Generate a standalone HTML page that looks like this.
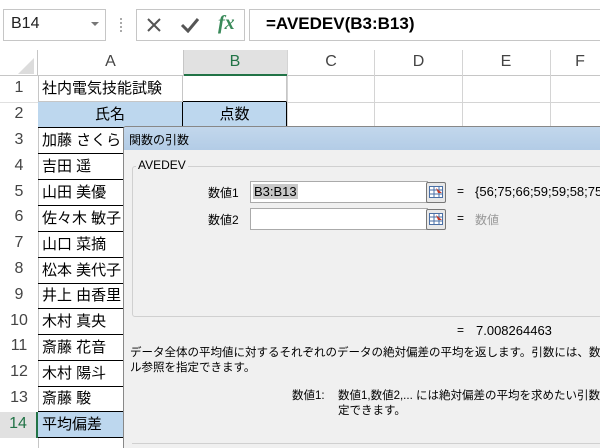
<!DOCTYPE html>
<html><head><meta charset="utf-8"><style>
*{margin:0;padding:0;box-sizing:border-box}
html,body{width:600px;height:448px;overflow:hidden;background:#fff}
body{font-family:"Liberation Sans","Noto Sans CJK JP",sans-serif}
#w{position:relative;width:600px;height:448px;overflow:hidden}
.a{position:absolute}
.t{font-size:15px;color:#000;white-space:nowrap}
.rn{position:absolute;left:0;width:38px;text-align:center;font-size:16px;color:#444}
.ca{position:absolute;left:38px;width:145px;height:26px;border-bottom:1px solid #000;border-right:1px solid #000;font-size:15px;padding-left:4px;line-height:25px;white-space:nowrap;overflow:hidden}
.d{font-size:11.5px;color:#000;white-space:nowrap}
</style></head><body><div id="w">
<div class="a" style="left:3px;top:9px;width:103px;height:32px;border:1px solid #c6c6c6"></div>
<div class="a t" style="left:11px;top:15px;font-size:16px;color:#222">B14</div>
<div class="a" style="left:91px;top:22px;border-left:4px solid transparent;border-right:4px solid transparent;border-top:4px solid #777"></div>
<div class="a" style="left:120px;top:18px;width:2px;height:14px;border-left:2px dotted #aaa"></div>
<div class="a" style="left:136px;top:9px;width:109px;height:32px;border:1px solid #c6c6c6"></div>
<svg class="a" style="left:146px;top:17px" width="16" height="16"><path d="M2 2L14 14M14 2L2 14" stroke="#555" stroke-width="2"/></svg>
<svg class="a" style="left:180px;top:17px" width="20" height="16"><path d="M2 8L8 14L18 2" stroke="#555" stroke-width="3" fill="none"/></svg>
<div class="a" style="left:218px;top:12px;font-family:'Liberation Serif',serif;font-style:italic;font-weight:bold;font-size:20px;color:#3a8a5a">fx</div>
<div class="a" style="left:249px;top:9px;width:351px;height:32px;border:1px solid #c6c6c6;border-right:none"></div>
<div class="a t" style="left:266px;top:14px;font-size:17px;font-weight:bold">=AVEDEV(B3:B13)</div>
<div class="a" style="left:0;top:50px;width:600px;height:26px;background:#fff;border-bottom:1px solid #c6c6c6"></div>
<div class="a" style="left:0;top:50px;width:38px;height:26px;border-right:1px solid #c6c6c6"></div>
<div class="a" style="left:18px;top:58px;border-left:16px solid transparent;border-bottom:16px solid #dcdcdc"></div>
<div class="a" style="left:183px;top:50px;width:104px;height:26px;background:#e1e1e1;border-bottom:2px solid #217346"></div>
<div class="a t" style="left:38px;top:53px;width:145px;text-align:center;font-size:16px;color:#444">A</div>
<div class="a t" style="left:183px;top:53px;width:104px;text-align:center;font-size:16px;color:#217346">B</div>
<div class="a t" style="left:287px;top:53px;width:88px;text-align:center;font-size:16px;color:#444">C</div>
<div class="a t" style="left:375px;top:53px;width:87px;text-align:center;font-size:16px;color:#444">D</div>
<div class="a t" style="left:462px;top:53px;width:88px;text-align:center;font-size:16px;color:#444">E</div>
<div class="a t" style="left:560px;top:53px;width:40px;text-align:center;font-size:16px;color:#444">F</div>
<div class="a" style="left:183px;top:50px;width:1px;height:26px;background:#c6c6c6"></div>
<div class="a" style="left:287px;top:50px;width:1px;height:78px;background:#d4d4d4"></div>
<div class="a" style="left:374px;top:50px;width:1px;height:78px;background:#d4d4d4"></div>
<div class="a" style="left:462px;top:50px;width:1px;height:78px;background:#d4d4d4"></div>
<div class="a" style="left:550px;top:50px;width:1px;height:78px;background:#d4d4d4"></div>
<div class="a" style="left:38px;top:76px;width:1px;height:372px;background:#c6c6c6"></div>
<div class="a" style="left:287px;top:102px;width:313px;height:1px;background:#d4d4d4"></div>
<div class="rn" style="top:79px">1</div><div class="rn" style="top:105px">2</div><div class="rn" style="top:131px">3</div><div class="rn" style="top:157px">4</div><div class="rn" style="top:183px">5</div><div class="rn" style="top:208px">6</div><div class="rn" style="top:234px">7</div><div class="rn" style="top:260px">8</div><div class="rn" style="top:286px">9</div><div class="rn" style="top:312px">10</div><div class="rn" style="top:337px">11</div><div class="rn" style="top:363px">12</div><div class="rn" style="top:389px">13</div>
<div class="rn" style="top:412px;height:26px;background:#e1e1e1;border-right:2px solid #217346;padding-top:3px;color:#217346">14</div>
<div class="a" style="left:0;top:102px;width:38px;height:1px;background:#e0e0e0"></div>
<div class="ca" style="top:76px;border-bottom-color:#c6c6c6;border-right-color:#c6c6c6">社内電気技能試験</div>
<div class="a" style="left:183px;top:76px;width:104px;height:26px;border-bottom:1px solid #000;border-right:1px solid #c6c6c6"></div>
<div class="ca" style="top:102px;background:#bdd7ee;text-align:center;padding:0">氏名</div>
<div class="a" style="left:183px;top:102px;width:104px;height:26px;background:#bdd7ee;border-bottom:1px solid #000;border-right:1px solid #000;text-align:center;line-height:25px;font-size:15px">点数</div>
<div class="ca" style="top:128px">加藤 さくら</div>
<div class="ca" style="top:154px">吉田 遥</div>
<div class="ca" style="top:180px">山田 美優</div>
<div class="ca" style="top:206px">佐々木 敏子</div>
<div class="ca" style="top:232px">山口 菜摘</div>
<div class="ca" style="top:258px">松本 美代子</div>
<div class="ca" style="top:283px">井上 由香里</div>
<div class="ca" style="top:309px">木村 真央</div>
<div class="ca" style="top:335px">斎藤 花音</div>
<div class="ca" style="top:361px">木村 陽斗</div>
<div class="ca" style="top:386px">斎藤 駿</div>
<div class="ca" style="top:412px;background:#bdd7ee">平均偏差</div>
<div class="a" style="left:123px;top:126px;width:477px;height:322px;background:#f0f0f0;border:1px solid #888;border-right:none;border-bottom:none;border-radius:3px 0 0 0;overflow:hidden">
<div class="a" style="left:0;top:0;width:477px;height:23px;background:linear-gradient(#c2d7ec,#b3cce6)"></div>
<div class="a d" style="left:5px;top:4px;font-size:12px">関数の引数</div>
<div class="a" style="left:8px;top:39px;width:470px;height:151px;border:1px solid #d0d0d0;border-radius:3px"></div>
<div class="a d" style="left:12px;top:31px;background:#f0f0f0;padding:0 2px;font-size:12px">AVEDEV</div>
<div class="a d" style="left:84px;top:57px;font-size:12px">数値1</div>
<div class="a d" style="left:84px;top:84px;font-size:12px">数値2</div>
<div class="a" style="left:126px;top:54px;width:178px;height:22px;background:#fff;border:1px solid #aaa"></div>
<div class="a" style="left:129px;top:57px;height:15px;background:#c8c8c8;font-size:13px;line-height:15px;padding:0 1px">B3:B13</div>
<div class="a" style="left:126px;top:81px;width:178px;height:22px;background:#fff;border:1px solid #aaa"></div>
<div class="a" style="left:302px;top:55px;width:20px;height:21px;background:#e8e8e8;border:1px solid #777;border-radius:2px"></div>
<div class="a" style="left:302px;top:82px;width:20px;height:21px;background:#e8e8e8;border:1px solid #777;border-radius:2px"></div>
<svg class="a" style="left:305px;top:59px" width="14" height="12"><rect x="0.5" y="0.5" width="13" height="11" fill="#fff" stroke="#4a6fa5"/><path d="M0 4H14M0 8H14M5 0V12M10 0V12" stroke="#4a6fa5"/><path d="M7 2L13 7L9 7Z" fill="#c0392b"/></svg>
<svg class="a" style="left:305px;top:86px" width="14" height="12"><rect x="0.5" y="0.5" width="13" height="11" fill="#fff" stroke="#4a6fa5"/><path d="M0 4H14M0 8H14M5 0V12M10 0V12" stroke="#4a6fa5"/><path d="M7 2L13 7L9 7Z" fill="#c0392b"/></svg>
<div class="a d" style="left:333px;top:57px;font-size:12px">=</div>
<div class="a d" style="left:351px;top:57px;font-size:13px">{56;75;66;59;59;58;75</div>
<div class="a d" style="left:333px;top:84px;font-size:12px">=</div>
<div class="a d" style="left:351px;top:84px;color:#999;font-size:12px">数値</div>
<div class="a d" style="left:333px;top:196px;font-size:12px">=</div>
<div class="a d" style="left:352px;top:196px;font-size:13px">7.008264463</div>
<div class="a d" style="left:6px;top:217px">データ全体の平均値に対するそれぞれのデータの絶対偏差の平均を返します。引数には、数値、数値</div>
<div class="a d" style="left:6px;top:232px">ル参照を指定できます。</div>
<div class="a d" style="left:168px;top:260px">数値1:</div>
<div class="a d" style="left:214px;top:260px">数値1,数値2,... には絶対偏差の平均を求めたい引数</div>
<div class="a d" style="left:214px;top:275px">定できます。</div>
<div class="a" style="left:8px;top:316px;width:470px;height:1px;background:#d0d0d0"></div>
</div>
</div></body></html>
